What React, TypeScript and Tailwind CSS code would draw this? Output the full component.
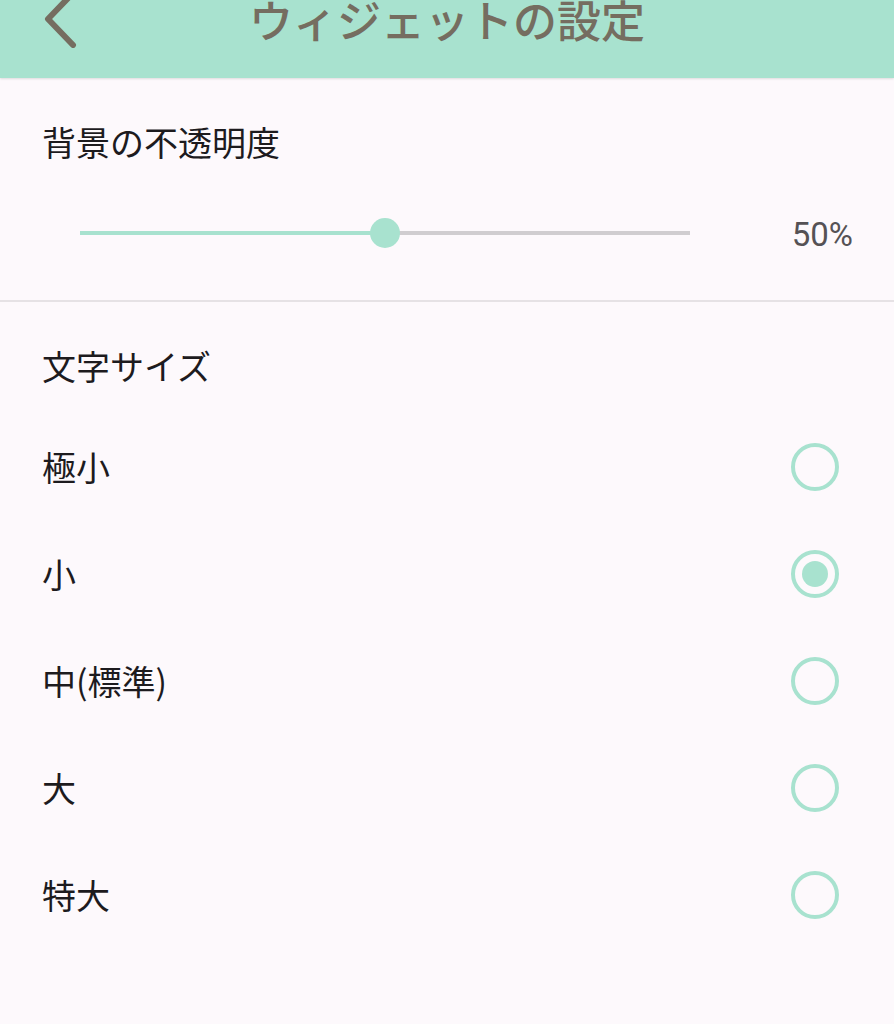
import { useState } from 'react';

const sizes = ['極小', '小', '中(標準)', '大', '特大'];

const font = { fontFamily: '"Noto Sans CJK JP", "Noto Sans", sans-serif' };

const Radio = ({ checked }: { checked: boolean }) => (
  <span className="w-12 h-12 rounded-full border-[4px] border-[#a8e2cf] flex items-center justify-center">
    {checked && <span className="w-[26px] h-[26px] rounded-full bg-[#a8e2cf]" />}
  </span>
);

const App = () => {
  const [selected, setSelected] = useState('小');
  const opacity = 50;

  return (
    <div className="min-h-[1024px] bg-[#fdf9fc] text-[#1d1b1e]" style={font}>
      {/* Header */}
      <div className="h-[78px] bg-[#a8e2cf] overflow-hidden grid grid-cols-[1fr_auto_1fr] items-start shadow-[0_1px_2px_rgba(0,0,0,0.12)]">
        <div className="pl-[40px] -mt-[10px]">
          <svg width="40" height="58" viewBox="0 0 40 58" fill="none">
            <path d="M33 3 L8 29 L33 55" stroke="#756d60" strokeWidth="6" strokeLinecap="round" strokeLinejoin="round" />
          </svg>
        </div>
        <h1 className="text-[44px] leading-[44px] font-medium text-[#756d60] -mt-[3px]">ウィジェットの設定</h1>
        <div />
      </div>

      {/* Opacity */}
      <section className="pt-[44px] pb-[47px] border-b-2 border-[#e6e2e5]">
        <h2 className="px-[42px] text-[34px] leading-[40px]">背景の不透明度</h2>
        <div className="mt-[51px] h-[40px] flex items-center pl-[80px] pr-[41px]">
          <div className="relative w-[610px] h-[4px] bg-[#d0cdd0]">
            <div className="h-full bg-[#a8e2cf]" style={{ width: `${opacity}%` }} />
            <div
              className="absolute top-1/2 w-[30px] h-[30px] -ml-[15px] -mt-[15px] rounded-full bg-[#a8e2cf]"
              style={{ left: `${opacity}%` }}
            />
          </div>
          <span className="ml-auto mt-[4px] text-[33px] leading-[40px] text-[#555255]" style={{ fontFamily: 'Roboto, sans-serif' }}>
            {opacity}%
          </span>
        </div>
      </section>

      {/* Text size */}
      <section className="pt-[44px]">
        <h2 className="px-[42px] text-[34px] leading-[40px] mb-[27px]">文字サイズ</h2>
        {sizes.map((s) => (
          <button
            key={s}
            onClick={() => setSelected(s)}
            className="w-full h-[107px] flex items-center justify-between pl-[42px] pr-[55px] text-left"
          >
            <span className="text-[34px] leading-[40px]">{s}</span>
            <Radio checked={selected === s} />
          </button>
        ))}
      </section>
    </div>
  );
};

export default App;
